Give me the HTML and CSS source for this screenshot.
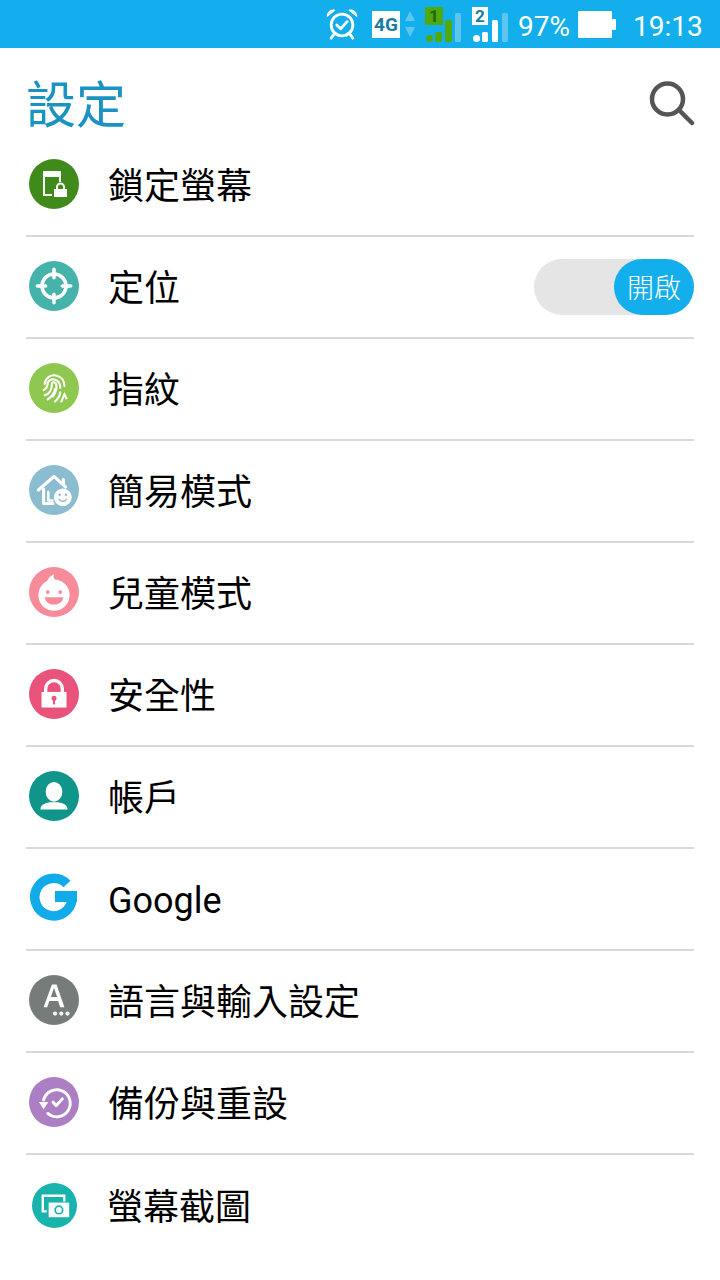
FILE: index.html
```html
<!DOCTYPE html>
<html lang="zh-Hant">
<head>
<meta charset="utf-8">
<title>設定</title>
<link rel="stylesheet" href="styles.css">
</head>
<body>
<div class="status">
  <svg class="s-alarm" width="34" height="34" viewBox="0 0 36 36" fill="none" stroke="#fff" stroke-width="3" stroke-linecap="round" stroke-linejoin="round">
    <circle cx="18" cy="19" r="11.5"/>
    <path d="M12.5 19l4 4 7-7.500"/>
    <path d="M2.500 9.500C3 5.500 6 3 10 3.500zM33.500 9.500C33 5.500 30 3 26 3.500z" fill="#fff" stroke-width="1.500"/>
    <path d="M9.500 29l-3 4M26.500 29l3 4"/>
  </svg>
  <span class="s-4g">4G</span>
  <svg class="s-arrows" width="12" height="28" viewBox="0 0 12 28" fill="#5fc4ef"><path d="M6 1l5 10H1zM1 17h10L6 27z"/></svg>
  <svg class="s-sig1" width="36" height="36" viewBox="0 0 36 36">
    <rect x="0" y="1" width="18" height="18" fill="#4fa90f"/>
    <text x="9" y="16" class="s-digit" fill="#1c6a00">1</text>
    <circle cx="4.500" cy="32.500" r="3.500" fill="#4fa90f"/>
    <rect x="10" y="26" width="7" height="10" rx="1.500" fill="#4fa90f"/>
    <rect x="20" y="14" width="7" height="22" rx="1.500" fill="#4fa90f"/>
    <rect x="30" y="7" width="6" height="29" rx="1.500" fill="#5fc4ef"/>
  </svg>
  <svg class="s-sig2" width="36" height="36" viewBox="0 0 36 36">
    <rect x="0" y="1" width="16" height="18" fill="#fff"/>
    <text x="8" y="16" class="s-digit" fill="#1a7ca3">2</text>
    <circle cx="4.500" cy="32.500" r="3.500" fill="#fff"/>
    <rect x="10" y="26" width="6" height="10" rx="1.500" fill="#fff"/>
    <rect x="20" y="14" width="6" height="22" rx="1.500" fill="#fff"/>
    <rect x="30" y="7" width="6" height="29" rx="1.500" fill="#5fc4ef"/>
  </svg>
  <span class="s-pct">97%</span>
  <svg class="s-batt" width="38" height="27" viewBox="0 0 38 27" fill="#fff"><rect width="34" height="27" rx="1"/><rect x="34" y="8" width="4" height="11" rx="1"/></svg>
  <span class="s-time">19:13</span>
</div>

<header class="head">
  <h1 class="title">設定</h1>
  <svg class="search" width="46" height="46" viewBox="0 0 46 46" fill="none" stroke="#555" stroke-width="4.500" stroke-linecap="round"><circle cx="18.500" cy="18" r="15.500"/><path d="M30 29l13 13"/></svg>
</header>

<ul class="list">
  <li class="row">
    <span class="ic" style="background:#3f8a1b">
      <svg viewBox="0 0 50 50" fill="none" stroke="#fff" stroke-width="2"><path d="M23 36H15V13h16v10"/><path d="M15 16h16" stroke-width="4"/><rect x="25" y="30" width="13" height="8" fill="#fff" stroke="none"/><path d="M28 30v-2a3.500 3.500 0 0 1 7 0v2"/></svg>
    </span>
    <span class="lb">鎖定螢幕</span>
  </li>
  <li class="row">
    <span class="ic" style="background:#45b3aa">
      <svg viewBox="0 0 48 48" fill="none" stroke="#fff" stroke-width="3.400" stroke-linecap="round"><circle cx="24" cy="24" r="11.500"/><path d="M24 8v8M24 32v8M8 24h8M32 24h8"/></svg>
    </span>
    <span class="lb">定位</span>
    <span class="toggle"><span class="knob">開啟</span></span>
  </li>
  <li class="row">
    <span class="ic" style="background:#8fc850">
      <svg viewBox="0 0 48 48" fill="none" stroke="#fff" stroke-width="2" stroke-linecap="round"><path d="M15 20c1-6 6-9 11-8 5 1 8 5 8 10"/><path d="M14 26c2-1 4-4 4-7 1-3 4-4 7-3 4 1 5 5 5 8"/><path d="M15 31c4-1 7-5 7-11 0-2 3-2 4 0 1 4 0 8-3 12"/><path d="M18 35c3-2 6-5 7-10M25 37c3-3 5-6 5-9M31 37l3-7 2 4"/></svg>
    </span>
    <span class="lb">指紋</span>
  </li>
  <li class="row">
    <span class="ic" style="background:#8bbccf">
      <svg viewBox="0 0 48 48" fill="none" stroke="#fff" stroke-width="3" stroke-linecap="round" stroke-linejoin="round"><path d="M9 24L24 11l11 10M33 14v5"/><path d="M14 23v14h9"/><path d="M18.500 26v8h4" stroke-width="2.400"/><circle cx="32.500" cy="31" r="8.500" fill="#fff" stroke="none"/><path d="M29 33c2 2.500 5 2.500 7 0" stroke="#8bbccf" stroke-width="1.500"/><circle cx="29.500" cy="28.500" r="1.200" fill="#8bbccf" stroke="none"/><circle cx="35.500" cy="28.500" r="1.200" fill="#8bbccf" stroke="none"/></svg>
    </span>
    <span class="lb">簡易模式</span>
  </li>
  <li class="row">
    <span class="ic" style="background:#f78b99">
      <svg viewBox="0 0 48 48" fill="#fff"><circle cx="24" cy="27" r="15"/><path d="M17 15c1-4 3-6 7-8-1 3 0 5 3 7z"/><circle cx="18" cy="24" r="1.800" fill="#f78b99"/><circle cx="30" cy="24" r="1.800" fill="#f78b99"/><path d="M15 29h18c-1 5-4 7-9 7s-8-2-9-7z" fill="#f78b99"/></svg>
    </span>
    <span class="lb">兒童模式</span>
  </li>
  <li class="row">
    <span class="ic" style="background:#e9537b">
      <svg viewBox="0 0 48 48" fill="#fff"><path d="M12 22h24v15H12z"/><path d="M16 23v-4a8 8 0 0 1 16 0v4" fill="none" stroke="#fff" stroke-width="3.200"/><circle cx="24" cy="28" r="2.400" fill="#e9537b"/><rect x="23" y="28" width="2" height="6" fill="#e9537b"/></svg>
    </span>
    <span class="lb">安全性</span>
  </li>
  <li class="row">
    <span class="ic" style="background:#0f958a">
      <svg viewBox="0 0 48 48" fill="#fff"><ellipse cx="24" cy="20" rx="8" ry="9.500"/><path d="M11 37c0-4 3-6 9-7h8c6 1 9 3 9 7z"/></svg>
    </span>
    <span class="lb">帳戶</span>
  </li>
  <li class="row">
    <span class="ic ic-g">
      <svg viewBox="0 0 50 50" fill="none" stroke="#12abea" stroke-width="9.500"><path d="M38 11A18.750 18.750 0 1 0 43.200 26"/><rect x="26" y="18" width="22" height="11" fill="#12abea" stroke="none"/></svg>
    </span>
    <span class="lb lb-latin">Google</span>
  </li>
  <li class="row">
    <span class="ic" style="background:#767c7a">
      <svg viewBox="0 0 48 48" fill="#fff"><path d="M14 31L22 9h4.500L34 31h-4l-2-6h-8.500l-2 6zm7-10h6l-3-8.500z"/><circle cx="25" cy="37" r="2"/><circle cx="31" cy="37" r="2"/><circle cx="37" cy="37" r="2"/></svg>
    </span>
    <span class="lb">語言與輸入設定</span>
  </li>
  <li class="row">
    <span class="ic" style="background:#ac7fc5">
      <svg viewBox="0 0 48 48" fill="none" stroke="#fff" stroke-width="2.800" stroke-linecap="round" stroke-linejoin="round"><path d="M14 22a13 13 0 1 1 4 13"/><path d="M9.500 24h9l-4.500 7z" fill="#fff" stroke="none"/><path d="M23 24l3 3.500 6-6.500"/></svg>
    </span>
    <span class="lb">備份與重設</span>
  </li>
  <li class="row row-last">
    <span class="ic ic-small" style="background:#18b3ad">
      <svg viewBox="0 0 46 46" fill="none" stroke="#fff" stroke-width="2.400"><path d="M15 29h-4V13h22v6"/><rect x="17" y="20" width="21" height="15" fill="#fff" stroke="none"/><circle cx="27.500" cy="27.500" r="3.800" stroke="#18b3ad" stroke-width="1.800"/></svg>
    </span>
    <span class="lb">螢幕截圖</span>
  </li>
</ul>
</body>
</html>
```

FILE: styles.css
```css
* { box-sizing: border-box; }
html, body { margin: 0; padding: 0; }
body {
  width: 720px;
  height: 1280px;
  overflow: hidden;
  background: #fff;
  font-family: "Noto Sans CJK TC", "Noto Sans", sans-serif;
  color: #000;
}
.status {
  height: 48px;
  background: #12afec;
  display: flex;
  align-items: center;
  padding-left: 325px;
  color: #fff;
  font-family: Roboto, sans-serif;
  font-size: 28px;
  white-space: nowrap;
}
.status svg { display: block; flex: none; }
.s-alarm { margin-right: 13px; }
.s-4g {
  flex: none;
  width: 28px;
  height: 27px;
  margin-right: 4px;
  background: #fff;
  color: #1a7ca3;
  font-size: 19px;
  font-weight: 700;
  line-height: 27px;
  text-align: center;
}
.s-arrows { margin-right: 9px; }
.s-sig1 { margin-right: 11px; }
.s-sig2 { margin-right: 10px; }
.s-digit {
  font-size: 17px;
  font-weight: 700;
  text-anchor: middle;
}
.s-pct { flex: none; width: 52px; margin-right: 8px; padding-top: 4px; }
.s-batt { margin-right: 17px; }
.s-time { flex: none; width: 72px; padding-top: 4px; }
.head {
  height: 87px;
  padding: 18px 25px 0 26px;
  display: flex;
  align-items: center;
  justify-content: space-between;
}
.title {
  margin: 0;
  font-size: 50px;
  font-weight: 400;
  line-height: 64px;
  color: #1b93c2;
}
.search { display: block; margin-top: 6px; }
.list { list-style: none; margin: 0 26px; padding: 0; }
.row {
  height: 102px;
  display: flex;
  align-items: center;
  border-bottom: 2px solid #d9d9d9;
  padding-bottom: 2px;
}
.row-last { border-bottom: 0; }
.ic {
  flex: none;
  width: 50px;
  height: 50px;
  margin-left: 3px;
  margin-right: 29px;
  border-radius: 50%;
  display: flex;
  align-items: center;
  justify-content: center;
}
.ic svg { display: block; width: 50px; height: 50px; }
.ic-g { border-radius: 0; }
.ic-small { width: 45px; height: 45px; margin-left: 6px; margin-right: 30px; }
.ic-small svg { width: 45px; height: 45px; }
.lb { font-size: 36px; line-height: 50px; white-space: nowrap; padding-bottom: 2px; }
.lb-latin { font-family: Roboto, sans-serif; padding-bottom: 0; padding-top: 6px; }
.toggle {
  margin-left: auto;
  margin-top: 2px;
  width: 160px;
  height: 56px;
  border-radius: 28px;
  background: #e5e5e5;
  display: flex;
  justify-content: flex-end;
}
.knob {
  width: 80px;
  height: 56px;
  border-radius: 28px;
  background: #12afec;
  color: #fff;
  font-size: 27px;
  font-weight: 300;
  line-height: 56px;
  text-align: center;
}
```
